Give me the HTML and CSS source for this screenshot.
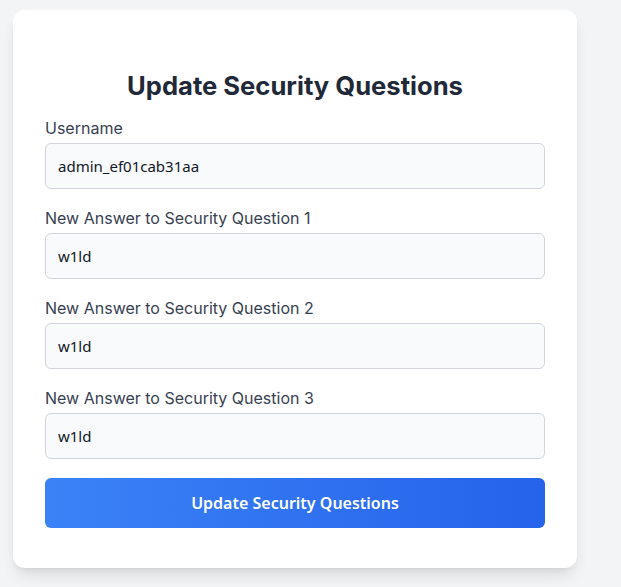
FILE: index.html
```html
<!DOCTYPE html>
<html lang="en">
<head>
<meta charset="utf-8">
<title>Update Security Questions</title>
<link rel="stylesheet" href="styles.css">
</head>
<body>
<main class="card">
  <h2 class="title">Update Security Questions</h2>
  <form class="form">
    <div class="field">
      <label class="label" for="u">Username</label>
      <input class="input" id="u" type="text" value="admin_ef01cab31aa">
    </div>
    <div class="field">
      <label class="label" for="a1">New Answer to Security Question 1</label>
      <input class="input" id="a1" type="text" value="w1ld">
    </div>
    <div class="field">
      <label class="label" for="a2">New Answer to Security Question 2</label>
      <input class="input" id="a2" type="text" value="w1ld">
    </div>
    <div class="field">
      <label class="label" for="a3">New Answer to Security Question 3</label>
      <input class="input" id="a3" type="text" value="w1ld">
    </div>
    <button class="button" type="button">Update Security Questions</button>
  </form>
</main>
</body>
</html>
```

FILE: styles.css
```css
html, body {
  margin: 0;
  padding: 0;
}
body {
  background: #f3f4f6;
  font-family: Inter, "Liberation Sans", sans-serif;
  min-height: 587px;
  padding: 10px 0 0 13px;
  box-sizing: border-box;
}
.card {
  width: 564px;
  box-sizing: border-box;
  background: #ffffff;
  border-radius: 12px;
  padding: 40px 32px 40px;
  box-shadow: 0 10px 15px -3px rgba(0, 0, 0, 0.1), 0 4px 6px -4px rgba(0, 0, 0, 0.1);
}
.title {
  margin: 20px 0 14px;
  font-size: 25.6px;
  line-height: 32px;
  font-weight: 700;
  color: #1f2937;
  text-align: center;
}
.form {
  display: flex;
  flex-direction: column;
}
.field {
  display: flex;
  flex-direction: column;
  margin-bottom: 17px;
}
.label {
  font-size: 16px;
  line-height: 24px;
  color: #374151;
  margin-bottom: 3px;
}
.input {
  height: 46px;
  box-sizing: border-box;
  padding: 0 12px;
  border: 1px solid #d1d5db;
  border-radius: 6px;
  background: #f9fafb;
  font-family: "Noto Sans", "Open Sans", sans-serif;
  font-size: 15px;
  color: #111827;
}
.button {
  margin-top: 2px;
  height: 50px;
  border: 0;
  border-radius: 6px;
  background: linear-gradient(to right, #3b82f6, #2563eb);
  color: #ffffff;
  font-family: "Noto Sans", "Open Sans", sans-serif;
  font-size: 16px;
  font-weight: 600;
}
```
